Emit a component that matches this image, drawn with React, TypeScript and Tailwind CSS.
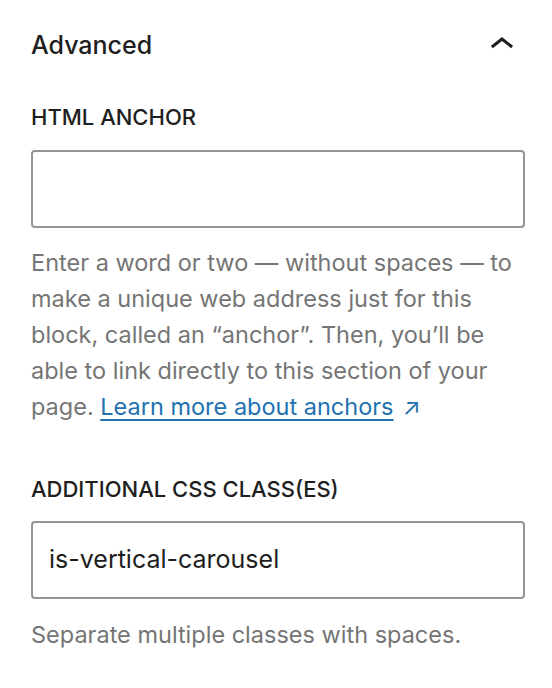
import React from "react";

export default function App() {
  return (
    <div
      className="w-[552px] h-[688px] bg-white pl-[31px] pr-[27px] text-[#1e1e1e]"
      style={{ fontFamily: "Inter, 'Noto Sans', sans-serif" }}
    >
      <div className="pt-[29px] flex items-center justify-between h-[61px] box-border">
        <div className="text-[25px] leading-[32px] font-medium">Advanced</div>
        <svg width="48" height="48" viewBox="0 0 24 24" className="-mr-[1px]" fill="#1e1e1e">
          <path d="M6.5 12.4L12 8l5.5 4.4-.9 1.2L12 10l-4.6 3.6-1-1.2z" />
        </svg>
      </div>

      <div className="mt-[44px] text-[22px] leading-[24px] font-medium uppercase">HTML Anchor</div>
      <div className="mt-[21px] h-[78px] rounded-[4px] border-2 border-[#949494] bg-white"></div>
      <p className="mt-[17px] text-[23.5px] leading-[36px] text-[#757575]">
        Enter a word or two — without spaces — to make a unique web address just for this block, called an “anchor”. Then, you’ll be able to link directly to this section of your page.{" "}
        <span className="text-[#2271b1] underline decoration-[2px] underline-offset-[4px]">Learn more about anchors</span>
        <span className="text-[#2271b1] ml-[9px]">↗</span>
      </p>

      <div className="mt-[52px] text-[22px] leading-[24px] font-medium uppercase">Additional CSS class(es)</div>
      <div className="mt-[20px] h-[78px] rounded-[4px] border-2 border-[#949494] bg-white flex items-center px-[16px] text-[25px] text-[#1e1e1e]">
        is-vertical-carousel
      </div>
      <p className="mt-[18px] text-[23.5px] leading-[36px] text-[#757575]">Separate multiple classes with spaces.</p>
    </div>
  );
}
